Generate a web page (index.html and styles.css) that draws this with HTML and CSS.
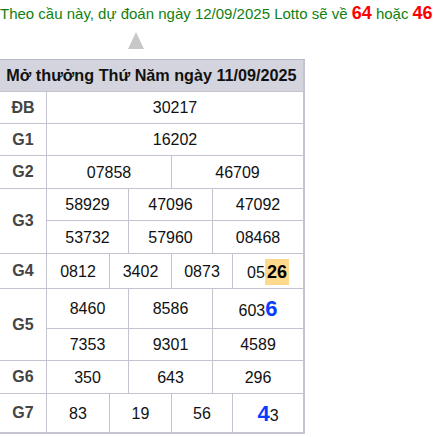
FILE: index.html
```html
<!DOCTYPE html>
<html lang="vi">
<head>
<meta charset="utf-8">
<link rel="stylesheet" href="styles.css">
</head>
<body>
<p class="predict">Theo cầu này, dự đoán ngày 12/09/2025 Lotto sẽ về <b class="hot">64</b> hoặc <b class="hot">46</b></p>
<div class="arrow"></div>
<div class="results">
  <div class="cell head">Mở thưởng Thứ Năm ngày 11/09/2025</div>

  <div class="cell lbl">ĐB</div>
  <div class="cell num full">30217</div>

  <div class="cell lbl">G1</div>
  <div class="cell num full">16202</div>

  <div class="cell lbl">G2</div>
  <div class="cell num h1">07858</div>
  <div class="cell num h2">46709</div>

  <div class="cell lbl tall">G3</div>
  <div class="cell num t1">58929</div>
  <div class="cell num t2">47096</div>
  <div class="cell num t3">47092</div>
  <div class="cell num t1">53732</div>
  <div class="cell num t2">57960</div>
  <div class="cell num t3">08468</div>

  <div class="cell lbl">G4</div>
  <div class="cell num q1">0812</div>
  <div class="cell num q2">3402</div>
  <div class="cell num q3">0873</div>
  <div class="cell num q4">05<b class="mark">26</b></div>

  <div class="cell lbl tall">G5</div>
  <div class="cell num t1">8460</div>
  <div class="cell num t2">8586</div>
  <div class="cell num t3">603<b class="big">6</b></div>
  <div class="cell num t1">7353</div>
  <div class="cell num t2">9301</div>
  <div class="cell num t3">4589</div>

  <div class="cell lbl">G6</div>
  <div class="cell num t1">350</div>
  <div class="cell num t2">643</div>
  <div class="cell num t3">296</div>

  <div class="cell lbl">G7</div>
  <div class="cell num q1">83</div>
  <div class="cell num q2">19</div>
  <div class="cell num q3">56</div>
  <div class="cell num q4"><b class="big">4</b>3</div>
</div>
</body>
</html>
```

FILE: styles.css
```css
body {
  margin: 0;
  font-family: "Liberation Sans", Arial, sans-serif;
  background: #fff;
}

.predict {
  margin: 0;
  height: 28px;
  padding-top: 2px;
  box-sizing: border-box;
  font-size: 15px;
  line-height: 22px;
  color: #118011;
  white-space: nowrap;
}

.hot {
  font-size: 18px;
  color: #ff0000;
}

.arrow {
  width: 0;
  height: 0;
  margin: 4px 0 0 128px;
  border-left: 8px solid transparent;
  border-right: 8px solid transparent;
  border-bottom: 17px solid #c8c8c8;
}

.results {
  margin-top: 10px;
  width: 305px;
  box-sizing: border-box;
  display: grid;
  grid-template-columns: 47px 63px 19px 43px 41px 20px 71px;
  grid-template-rows: 32px 32px 32px 33px 32px 33px 35px 40px 32px 33px 39px;
  border-top: 1px solid #b9bac7;
  border-right: 1px solid #c3c4d0;
  border-bottom: 1px solid #c3c4d0;
}

.cell {
  box-sizing: border-box;
  display: flex;
  align-items: center;
  justify-content: center;
  border-right: 1px solid #c3c4d0;
  border-bottom: 1px solid #c3c4d0;
  white-space: nowrap;
}

.head {
  grid-column: 1 / -1;
  background: #d3d4dd;
  font-weight: bold;
  font-size: 16.2px;
  color: #111;
}

.lbl {
  grid-column: 1;
  font-weight: bold;
  font-size: 16px;
  color: #444;
}

.lbl.tall {
  grid-row: span 2;
}

.num {
  font-size: 16px;
  color: #111;
  align-items: baseline;
  align-content: center;
  flex-wrap: wrap;
  padding-top: 1px;
}

.full { grid-column: 2 / -1; }
.h1 { grid-column: 2 / 5; }
.h2 { grid-column: 5 / -1; }
.t1 { grid-column: 2 / 4; }
.t2 { grid-column: 4 / 6; }
.t3 { grid-column: 6 / -1; }
.q1 { grid-column: 2 / 3; }
.q2 { grid-column: 3 / 5; }
.q3 { grid-column: 5 / 7; }
.q4 { grid-column: 7 / -1; }

.mark {
  font-size: 18px;
  line-height: 26px;
  padding: 0 2px;
  background: #ffd98c;
  color: #000;
}

.big {
  font-size: 22px;
  color: #0a3cff;
}
```
